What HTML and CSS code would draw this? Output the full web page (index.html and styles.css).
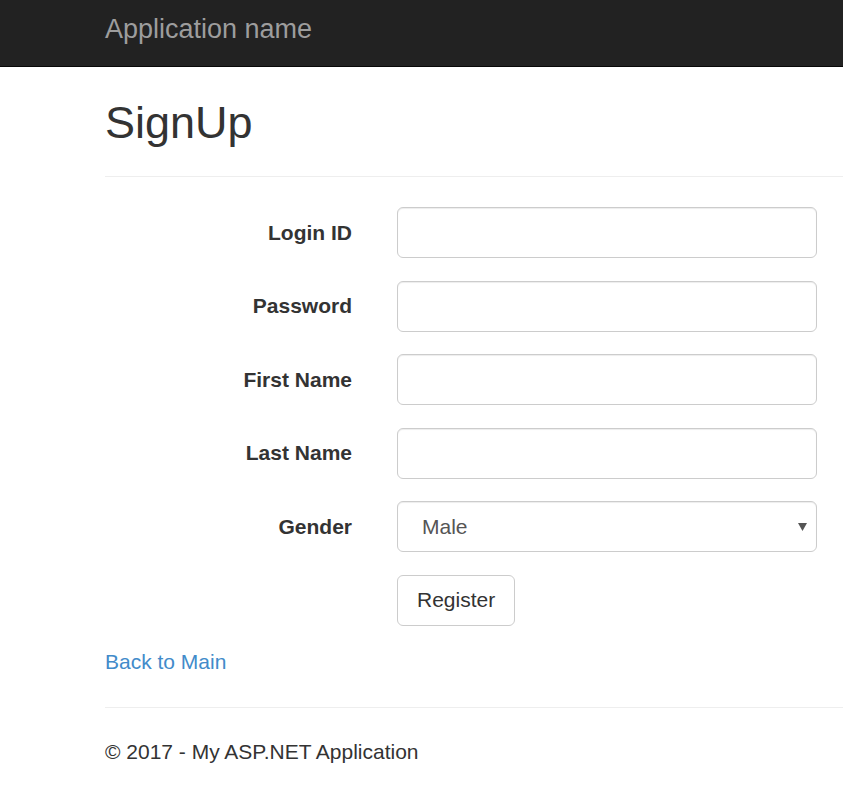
FILE: index.html
```html
<!DOCTYPE html>
<html lang="en">
<head>
<meta charset="utf-8">
<title>SignUp</title>
<link rel="stylesheet" href="styles.css">
</head>
<body>
<header class="navbar">
  <a class="brand" href="#">Application name</a>
</header>
<main class="content">
  <h2 class="title">SignUp</h2>
  <hr class="rule">
  <form class="form">
    <label class="label" for="login">Login ID</label>
    <input class="control" id="login" type="text">
    <label class="label" for="pwd">Password</label>
    <input class="control" id="pwd" type="password">
    <label class="label" for="fname">First Name</label>
    <input class="control" id="fname" type="text">
    <label class="label" for="lname">Last Name</label>
    <input class="control" id="lname" type="text">
    <label class="label" for="gender">Gender</label>
    <div class="select-wrap">
      <select class="control select" id="gender">
        <option>Male</option>
        <option>Female</option>
      </select>
      <svg class="arrow" width="9" height="8" viewBox="0 0 9 8"><path d="M0 0H9L4.5 8Z" fill="#555"/></svg>
    </div>
    <span></span>
    <div><button class="btn" type="button">Register</button></div>
  </form>
  <p class="back"><a href="#">Back to Main</a></p>
  <hr class="rule rule-footer">
  <footer class="footer">© 2017 - My ASP.NET Application</footer>
</main>
</body>
</html>
```
FILE: styles.css
```css
* { box-sizing: border-box; }
html, body { margin: 0; padding: 0; }
body {
  font-family: "Liberation Sans", Arial, Helvetica, sans-serif;
  font-size: 21px;
  line-height: 30px;
  color: #333;
  background: #fff;
  overflow: hidden;
}
.navbar {
  height: 67px;
  background: #222;
  border-bottom: 1px solid #080808;
  padding-left: 105px;
  display: flex;
  align-items: center;
}
.brand {
  font-size: 27px;
  color: #9d9d9d;
  text-decoration: none;
  line-height: 30px;
  margin-top: -8px;
}
.content {
  padding-left: 105px;
}
.title {
  margin: 31px 0 0;
  font-size: 45px;
  line-height: 50px;
  font-weight: 500;
  color: #333;
}
.rule {
  border: 0;
  border-top: 1px solid #eee;
  margin: 28px 0 0;
  height: 0;
}
.form {
  margin-top: 30px;
  display: grid;
  grid-template-columns: 247px 420px;
  column-gap: 45px;
  row-gap: 22.5px;
  align-items: center;
}
.label {
  text-align: right;
  font-weight: 700;
}
.control {
  display: block;
  width: 100%;
  height: 51px;
  padding: 0 18px;
  font-family: inherit;
  font-size: 21px;
  color: #555;
  background: #fff;
  border: 1px solid #ccc;
  border-radius: 6px;
  box-shadow: inset 0 1px 1px rgba(0, 0, 0, 0.075);
  outline: none;
}
.select-wrap { position: relative; }
.select {
  appearance: none;
  -webkit-appearance: none;
  padding-left: 24px;
}
.arrow {
  position: absolute;
  right: 10px;
  top: 22px;
}
.btn {
  height: 51px;
  padding: 0 19px;
  font-family: inherit;
  font-size: 21px;
  color: #333;
  background: #fff;
  border: 1px solid #ccc;
  border-radius: 6px;
}
.back {
  margin: 21.5px 0 0;
}
.back a {
  color: #428bca;
  text-decoration: none;
}
.rule-footer { margin-top: 30px; }
.footer {
  margin-top: 29px;
}
```
